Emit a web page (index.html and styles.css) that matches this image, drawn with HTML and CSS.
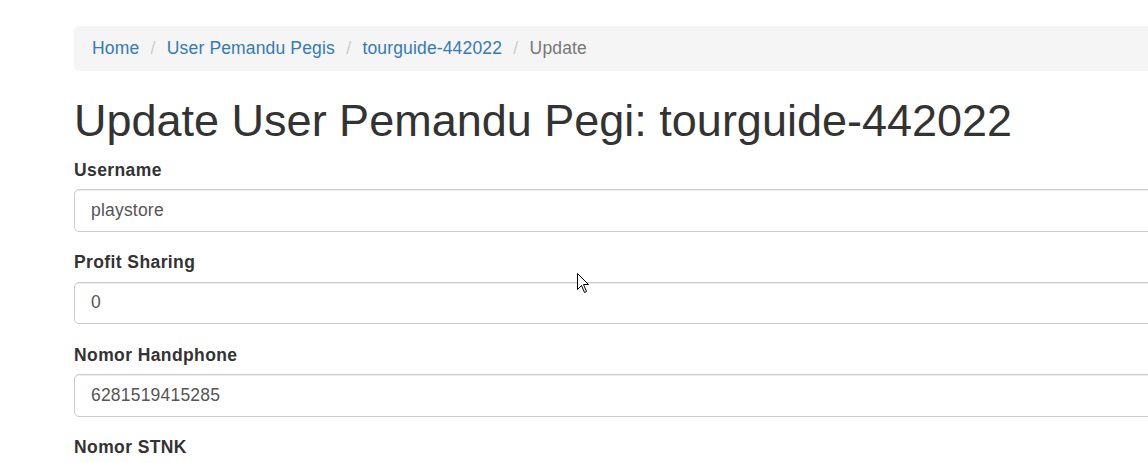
FILE: index.html
```html
<!DOCTYPE html>
<html>
<head>
    <meta charset="utf-8" />
    <title>Update User Pemandu Pegi</title>
    <link rel="stylesheet" href="styles.css">
</head>
<body>
    <div class="container">
        <ul class="breadcrumb">
            <li><a href="#">Home</a></li>
            <li><a href="#">User Pemandu Pegis</a></li>
            <li><a href="#">tourguide-442022</a></li>
            <li class="active">Update</li>
        </ul>

        <h1>Update User Pemandu Pegi: tourguide-442022</h1>

        <form class="user-form">
            <div class="form-group">
                <label>Username</label>
                <input type="text" class="form-control" value="playstore" />
            </div>
            <div class="form-group">
                <label>Profit Sharing</label>
                <input type="text" class="form-control" value="0" />
            </div>
            <div class="form-group">
                <label>Nomor Handphone</label>
                <input type="text" class="form-control" value="6281519415285" />
            </div>
            <div class="form-group">
                <label>Nomor STNK</label>
                <input type="text" class="form-control" value="" />
            </div>
        </form>
    </div>

    <!-- mouse pointer caught in the screenshot -->
    <svg class="pointer" width="13" height="21" viewBox="0 0 13 21">
        <path d="M0.5 0.5 L0.5 16.5 L4.5 12.5 L7.5 19.5 L9.5 18.5 L6.5 11.5 L11.5 11.5 Z" fill="#fff" stroke="#000" stroke-width="1" stroke-linejoin="miter" />
    </svg>
</body>
</html>
```

FILE: styles.css
```css
* { box-sizing: border-box; }

html, body {
    margin: 0;
    padding: 0;
    overflow: hidden;
}

body {
    background: #ffffff;
    font-family: "Liberation Sans", Arial, sans-serif;
    font-size: 17.5px;
    line-height: 1.42857;
    color: #333;
    position: relative;
}

.container {
    width: 1200px;
    padding: 26px 0 0 74px;
}

.breadcrumb {
    list-style: none;
    margin: 0 0 25px;
    padding: 10px 18px;
    background: #f5f5f5;
    border-radius: 5px;
    letter-spacing: 0.15px;
}

.breadcrumb li {
    display: inline-block;
}

.breadcrumb li + li::before {
    content: "/\00a0";
    padding: 0 6.25px;
    color: #ccc;
}

.breadcrumb a {
    color: #337ab7;
    text-decoration: none;
}

.breadcrumb .active {
    color: #777;
}

h1 {
    font-family: inherit;
    font-weight: 500;
    font-size: 45px;
    line-height: 1.1;
    margin: 25px 0 12.5px;
    color: #333;
}

.form-group {
    margin-bottom: 18.75px;
}

.form-group label {
    display: block;
    font-weight: bold;
    letter-spacing: 0.4px;
    margin-bottom: 6.25px;
}

.form-control {
    display: block;
    width: 100%;
    height: 42.5px;
    padding: 7.5px 16px;
    font-family: inherit;
    font-size: 17.5px;
    line-height: 1.42857;
    letter-spacing: 0.2px;
    color: #555;
    background: #fff;
    border: 1px solid #ccc;
    border-radius: 5px;
    box-shadow: inset 0 1px 1px rgba(0, 0, 0, .075);
}

.pointer {
    position: absolute;
    left: 577px;
    top: 273px;
}
```
